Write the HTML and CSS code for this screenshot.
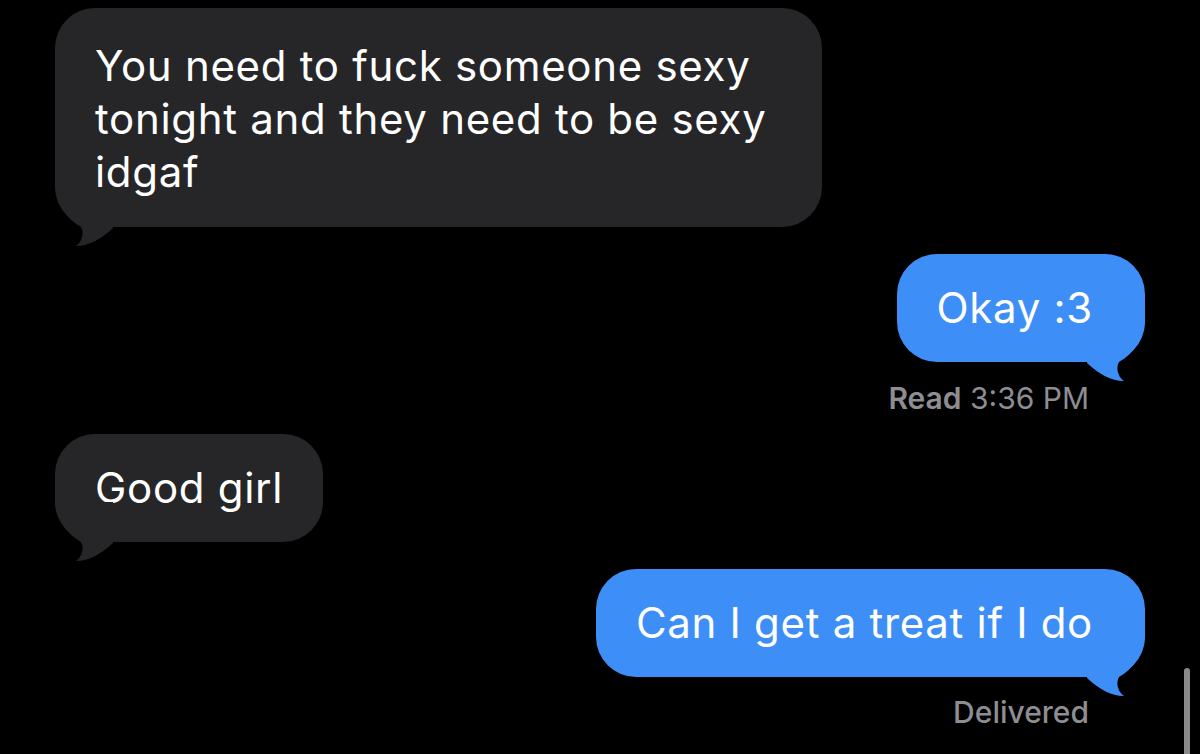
FILE: index.html
```html
<!DOCTYPE html>
<html lang="en">
<head>
    <meta charset="UTF-8">
    <meta name="viewport" content="width=device-width, initial-scale=1.0">
    <title>Messages</title>
    <link rel="stylesheet" href="styles.css">
</head>
<body>

    <div class="thread">
        <!-- Recibido -->
        <div class="bubble received first">
            You need to fuck someone sexy<br>tonight and they need to be sexy<br>idgaf
            <svg class="tail" viewBox="0 -40 60 60"><path d="M0 -40 C2 -22 12 -8 26 0 C29 5 28 14 21 19 C34 19 46 12 58 1 L58 -40 Z"/></svg>
        </div>

        <!-- Enviado -->
        <div class="bubble sent">
            Okay :3
            <svg class="tail" viewBox="0 -40 60 60"><path d="M0 -40 C2 -22 12 -8 26 0 C29 5 28 14 21 19 C34 19 46 12 58 1 L58 -40 Z"/></svg>
        </div>
        <div class="status"><b>Read</b> 3:36 PM</div>

        <div class="bubble received">
            Good girl
            <svg class="tail" viewBox="0 -40 60 60"><path d="M0 -40 C2 -22 12 -8 26 0 C29 5 28 14 21 19 C34 19 46 12 58 1 L58 -40 Z"/></svg>
        </div>

        <div class="bubble sent">
            Can I get a treat if I do
            <svg class="tail" viewBox="0 -40 60 60"><path d="M0 -40 C2 -22 12 -8 26 0 C29 5 28 14 21 19 C34 19 46 12 58 1 L58 -40 Z"/></svg>
        </div>
        <div class="status delivered">Delivered</div>
    </div>

    <div class="scrollbar"></div>

</body>
</html>
```

FILE: styles.css
```css
/* Reset */
* {
    margin: 0;
    padding: 0;
    box-sizing: border-box;
}

body {
    font-family: 'Inter', 'Roboto', sans-serif;
    background-color: #000;
    color: #fff;
    height: 100vh;
    overflow: hidden;
}

/* Conversación */
.thread {
    display: flex;
    flex-direction: column;
    padding: 8px 55px 0 55px;
}

.bubble {
    position: relative;
    font-size: 42px;
    line-height: 54px;
    padding: 27px 40px;
    border-radius: 40px;
    letter-spacing: 0.7px;
}

.bubble .tail {
    position: absolute;
    bottom: -20px;
    width: 60px;
    height: 60px;
}

.received {
    align-self: flex-start;
    background-color: #262628;
    margin-top: 20px;
}

.received .tail {
    left: 0;
    fill: #262628;
}

.received.first {
    margin-top: 0;
    line-height: 53px;
    padding: 31px 55px 29px 40px;
}

.sent {
    align-self: flex-end;
    background-color: #3e8ef7;
    padding-right: 52px;
    margin-top: 27px;
}

.sent .tail {
    right: 0;
    fill: #3e8ef7;
    transform: scaleX(-1);
}

/* Estado de lectura */
.status {
    align-self: flex-end;
    margin-right: 56px;
    margin-top: 20px;
    font-size: 30px;
    line-height: 32px;
    color: #8d8d92;
}

.status b {
    font-weight: 600;
}

.status.delivered {
    margin-top: 19px;
    font-weight: 500;
}

.scrollbar {
    position: absolute;
    right: 10px;
    top: 668px;
    width: 6px;
    height: 100px;
    border-radius: 3px;
    background-color: #8a8a8a;
}
```
